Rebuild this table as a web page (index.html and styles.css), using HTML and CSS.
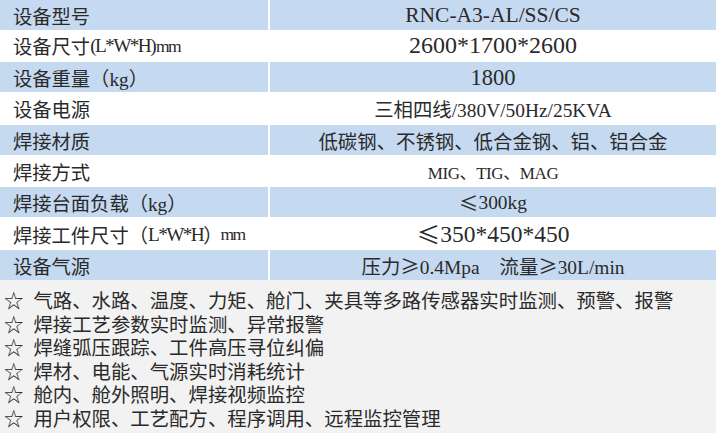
FILE: index.html
```html
<!DOCTYPE html>
<html lang="zh-CN">
<head>
<meta charset="utf-8">
<title>设备参数</title>
<link rel="stylesheet" href="styles.css">
</head>
<body>
<div class="spec">
  <div class="row blue first">
    <div class="k">设备型号</div>
    <div class="v fs-model">RNC-A3-AL/SS/CS</div>
  </div>
  <div class="row white">
    <div class="k">设备尺寸<span class="lat">(L*W*H)</span><span class="mm">mm</span></div>
    <div class="v fs-big">2600*1700*2600</div>
  </div>
  <div class="row blue">
    <div class="k">设备重量（kg）</div>
    <div class="v fs-weight">1800</div>
  </div>
  <div class="row white">
    <div class="k">设备电源</div>
    <div class="v fs-norm">三相四线/380V/50Hz/25KVA</div>
  </div>
  <div class="row blue">
    <div class="k">焊接材质</div>
    <div class="v fs-norm">低碳钢、不锈钢、低合金钢、铝、铝合金</div>
  </div>
  <div class="row white short">
    <div class="k">焊接方式</div>
    <div class="v fs-small">MIG、TIG、MAG</div>
  </div>
  <div class="row blue">
    <div class="k">焊接台面负载（kg）</div>
    <div class="v fs-norm"><span class="cjk">≤</span>300kg</div>
  </div>
  <div class="row white">
    <div class="k">焊接工件尺寸（<span class="lat">L*W*H</span>）<span class="mm tight">mm</span></div>
    <div class="v fs-big2"><span class="cjk">≤</span>350*450*450</div>
  </div>
  <div class="row blue last">
    <div class="k">设备气源</div>
    <div class="v fs-norm"><span>压力<span class="cjk">≥</span>0.4Mpa</span><span class="gap-l">流量<span class="cjk">≥</span>30L/min</span></div>
  </div>
</div>
<ul class="features">
  <li><span class="star">☆</span>气路、水路、温度、力矩、舱门、夹具等多路传感器实时监测、预警、报警</li>
  <li><span class="star">☆</span>焊接工艺参数实时监测、异常报警</li>
  <li><span class="star">☆</span>焊缝弧压跟踪、工件高压寻位纠偏</li>
  <li><span class="star">☆</span>焊材、电能、气源实时消耗统计</li>
  <li><span class="star">☆</span>舱内、舱外照明、焊接视频监控</li>
  <li><span class="star">☆</span>用户权限、工艺配方、程序调用、远程监控管理</li>
</ul>
</body>
</html>
```

FILE: styles.css
```css
html, body {
  margin: 0;
  padding: 0;
  background: #ffffff;
}

body {
  width: 716px;
  height: 433px;
  overflow: hidden;
  color: #2a2a2a;
  font-family: "Liberation Serif", "Noto Sans CJK SC", serif;
}

.spec {
  display: flex;
  flex-direction: column;
}

.row {
  display: grid;
  grid-template-columns: 268px 1fr;
  column-gap: 2px;
  height: 34px;
}

.row.blue {
  height: 29px;
}

.row.first {
  height: 28px;
}

.row.short {
  height: 33px;
}

.row.last {
  height: 30px;
}

.row.blue .k,
.row.blue .v {
  background: #c5d9f1;
}

.k {
  display: flex;
  align-items: center;
  padding-left: 13px;
  padding-top: 2px;
  font-size: 19.3px;
  white-space: nowrap;
}

.v {
  display: flex;
  align-items: center;
  justify-content: center;
  padding-top: 1px;
  white-space: nowrap;
}

.lat {
  letter-spacing: -1.6px;
}

.mm {
  font-size: 17.5px;
  letter-spacing: -1.5px;
  margin-left: 1px;
}

.mm.tight {
  margin-left: -2px;
}

.cjk {
  font-family: "Noto Sans CJK SC", sans-serif;
}

.fs-model {
  font-size: 21.5px;
}

.fs-big {
  font-size: 24px;
}

.fs-big2 {
  font-size: 23.5px;
}

.fs-weight {
  font-size: 22.5px;
}

.fs-norm {
  font-size: 19.4px;
}

.fs-small {
  font-size: 17px;
  letter-spacing: -0.4px;
}

.gap-l {
  margin-left: 20px;
}

.features {
  list-style: none;
  margin: 0;
  padding: 8px 0 0 4px;
  height: 153px;
  box-sizing: border-box;
  background: #f2f2f2;
  font-family: "Noto Sans CJK SC", sans-serif;
  font-size: 19.4px;
  line-height: 23.6px;
  white-space: nowrap;
}

.star {
  margin-right: 10px;
}
```
